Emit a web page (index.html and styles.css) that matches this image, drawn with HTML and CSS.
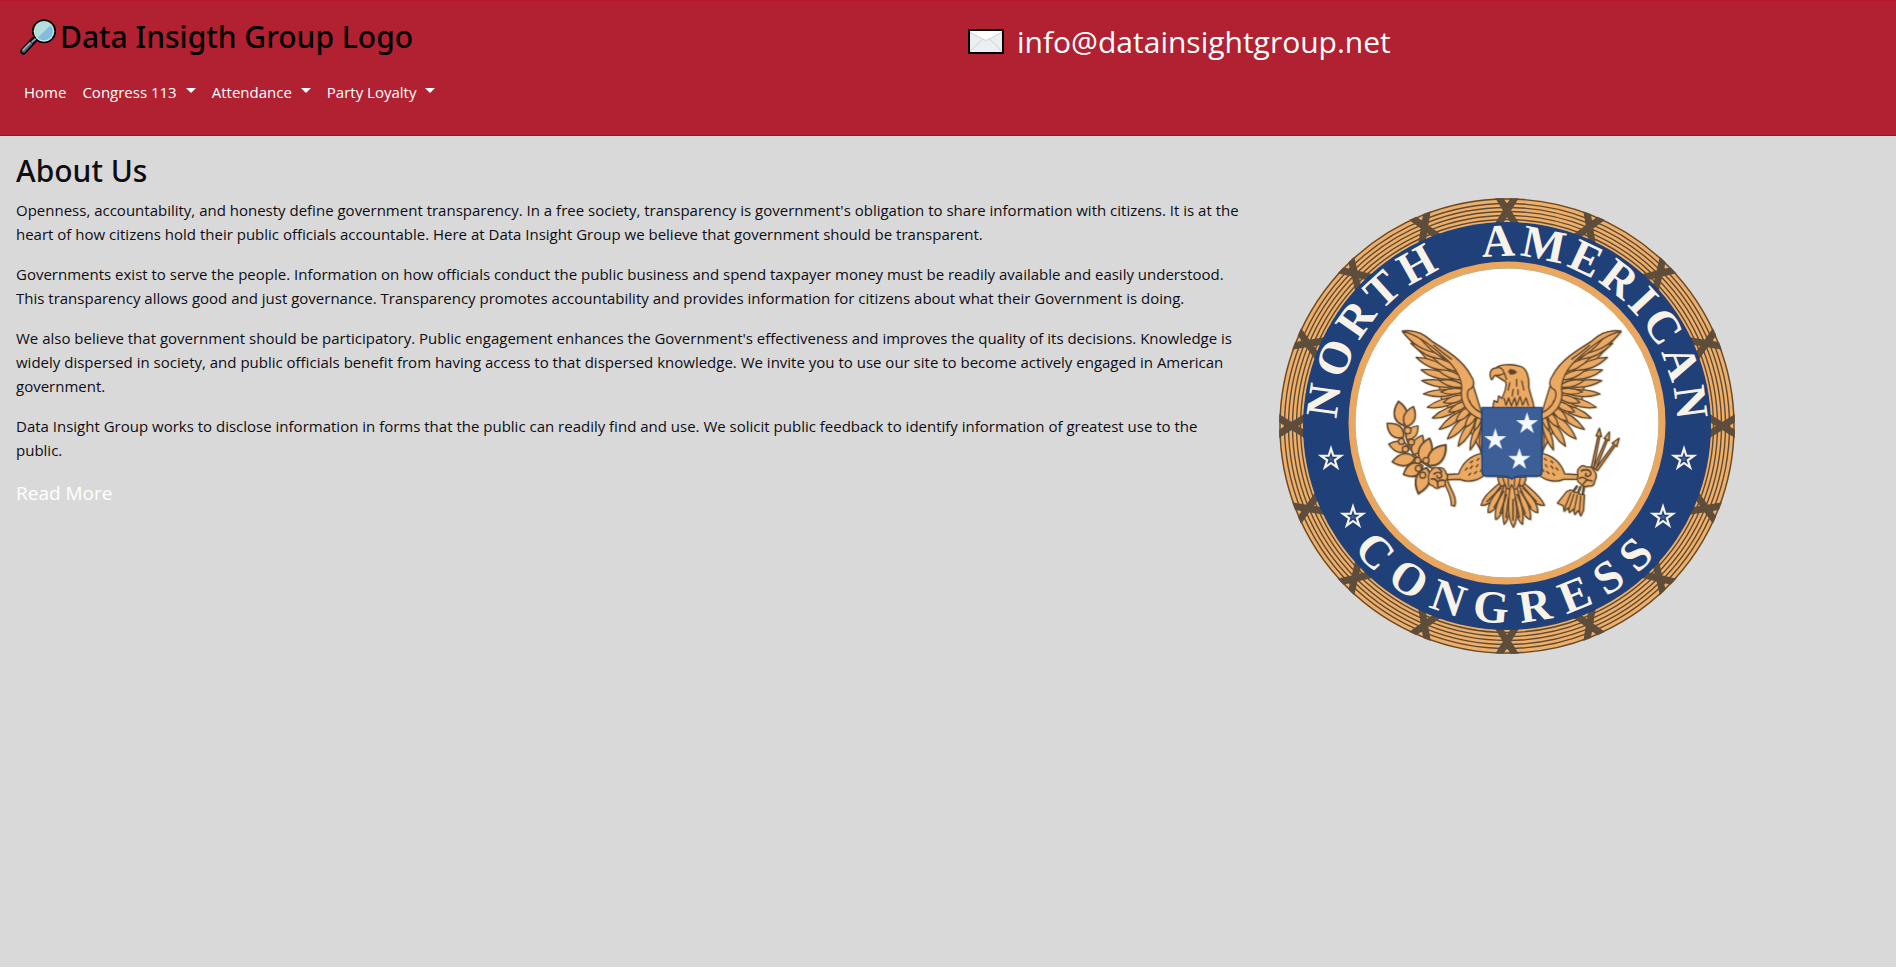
FILE: index.html
```html
<!DOCTYPE html>
<html lang="en">
<head>
<meta charset="utf-8">
<title>Data Insight Group</title>
<link rel="stylesheet" href="styles.css">
</head>
<body>
<div class="page">
  <header class="header">
    <div class="header-col">
      <h1 class="brand">
        <svg class="brand-icon" viewBox="0 0 108 108" aria-hidden="true">
          <path d="M10 97 42 63" stroke="#000" stroke-width="19" stroke-linecap="round"/>
          <circle cx="72" cy="37" r="36" fill="#000"/>
          <path d="M11 96 32 74" stroke="#55637f" stroke-width="10" stroke-linecap="round"/>
          <path d="M9 93 30 71" stroke="#a9b5c8" stroke-width="4" stroke-linecap="round"/>
          <path d="M35 70 47 59" stroke="#8c9bb5" stroke-width="6"/>
          <circle cx="72" cy="37" r="31" fill="#d4e6ec"/>
          <circle cx="72" cy="37" r="27" fill="#83bce0"/>
          <path d="M46 44A27 27 0 0 1 92 19L53 56A27 27 0 0 1 46 44Z" fill="#b2dfdb"/>
        </svg>
        <span>Data Insigth Group Logo</span>
      </h1>
      <nav class="nav">
        <a class="nav-link" href="#home">Home</a>
        <button class="nav-link caret" type="button">Congress 113</button>
        <button class="nav-link caret" type="button">Attendance</button>
        <button class="nav-link caret" type="button">Party Loyalty</button>
      </nav>
    </div>
    <div class="header-col contact">
      <svg class="mail-icon" viewBox="0 0 108 75" aria-hidden="true">
        <path fill="#000" d="M0 0h108v75H0z"/>
        <path fill="#eceff1" d="M6 6h96v63H6z"/>
        <path d="M6 67 43 31M102 67 65 31" stroke="#d5cdc8" stroke-width="3"/>
        <path d="M6 6h96v4L60 32q-6 4-12 0L6 10Z" fill="#fff"/>
        <path d="M6 10 48 32q6 4 12 0L102 10" fill="none" stroke="#cfd0d2" stroke-width="3"/>
      </svg>
      <a class="mail-link" href="mailto:info@datainsightgroup.net">info@datainsightgroup.net</a>
    </div>
  </header>

  <main class="main">
    <h2 class="title">About Us</h2>
    <div class="row">
      <div class="copy">
        <p>Openness, accountability, and honesty define government transparency. In a free society, transparency is government's obligation to share information with citizens. It is at the heart of how citizens hold their public officials accountable. Here at Data Insight Group we believe that government should be transparent.</p>
        <p>Governments exist to serve the people. Information on how officials conduct the public business and spend taxpayer money must be readily available and easily understood. This transparency allows good and just governance. Transparency promotes accountability and provides information for citizens about what their Government is doing.</p>
        <p>We also believe that government should be participatory. Public engagement enhances the Government's effectiveness and improves the quality of its decisions. Knowledge is widely dispersed in society, and public officials benefit from having access to that dispersed knowledge. We invite you to use our site to become actively engaged in American government.</p>
        <p>Data Insight Group works to disclose information in forms that the public can readily find and use. We solicit public feedback to identify information of greatest use to the public.</p>
        <a class="more" href="#more">Read More</a>
      </div>
      <div class="figure">
        <svg class="seal" viewBox="-228 -228 456 456" role="img" aria-label="North American Congress seal">
          <defs>
            <path id="arc-top" d="M0 170A170 170 0 0 1 0-170A170 170 0 0 1 0 170"/>
            <path id="arc-bottom" d="M-197 0A197 197 0 0 0 197 0"/>
            <clipPath id="disc"><circle r="228"/></clipPath>
            <path id="star" d="M0-1 .225-.309 .951-.309 .363 .118 .588 .809 0 .382-.588 .809-.363 .118-.951-.309-.225-.309Z"/>
            <g id="wrap"><path d="M-9-230 9-201M9-230-9-201"/></g>
            <g id="wraps4">
              <use href="#wrap"/><use href="#wrap" transform="rotate(22.5)"/><use href="#wrap" transform="rotate(45)"/><use href="#wrap" transform="rotate(67.5)"/>
            </g>
            <g id="outline-star">
              <use href="#star" transform="scale(14)" fill="#f8f3ea"/>
              <use href="#star" transform="scale(7)" fill="#20407a"/>
              <use href="#star" transform="scale(3)" fill="#46608e"/>
            </g>
            <g id="wing">
              <path d="M97 62C130 58 160 68 185 92C225 120 275 150 300 195L335 308V425L300 360 215 270 200 180Z"/>
              <path d="M300 418Q328 385 335 335Q300 362 300 418Z"/>
              <path d="M332 425Q342 385 338 345Q322 380 332 425Z"/>
              <path d="M264 407Q303 380 318 325Q275 345 264 407Z"/>
              <path d="M232 385Q280 368 305 310Q255 328 232 385Z"/>
              <path d="M207 356Q258 348 295 295Q240 308 207 356Z"/>
              <path d="M187 322Q240 325 285 280Q225 284 187 322Z"/>
              <path d="M172 290Q228 298 275 262Q215 256 172 290Z"/>
              <path d="M160 250Q212 268 268 245Q210 228 160 250Z"/>
              <path d="M155 210Q205 240 262 225Q210 200 155 210Z"/>
              <path d="M153 178Q195 212 252 205Q210 172 153 178Z"/>
              <path d="M138 140Q180 182 240 180Q195 142 138 140Z"/>
              <path d="M122 98Q165 143 225 150Q185 108 122 98Z"/>
              <path d="M97 62Q138 118 205 128Q175 78 97 62Z"/>
              <path d="M312 362Q338 340 338 302Q314 320 312 362Z"/>
              <path d="M285 350Q315 340 325 300Q290 308 285 350Z"/>
              <path d="M258 332Q292 328 310 288Q270 290 258 332Z"/>
              <path d="M236 304Q275 308 300 272Q258 270 236 304Z"/>
              <path d="M220 276Q260 285 290 255Q248 248 220 276Z"/>
              <path d="M212 244Q250 260 288 240Q250 224 212 244Z"/>
              <path d="M208 210Q245 238 285 228Q250 200 208 210Z"/>
              <path d="M203 178Q240 212 285 208Q250 175 203 178Z"/>
              <path d="M188 140Q225 182 275 185Q240 146 188 140Z"/>
              <path d="M148 80Q195 140 255 155Q220 105 148 80Z"/>
              <path d="M97 62C130 56 160 68 185 92C228 118 280 150 302 195C316 214 312 232 296 238C284 256 302 294 337 308V328C298 314 272 285 274 245C280 215 262 172 220 138C190 110 145 72 97 62Z"/>
              <path d="M190 103Q215 125 246 147" fill="none"/>
            </g>
            <path id="leaf" d="M0 0C-19-13-21-35 0-58C21-35 19-13 0 0Z"/>
          </defs>

          <circle r="228" fill="#efaf68"/>
          <g class="rim">
            <circle r="227"/><circle r="222.5"/><circle r="218.5"/><circle r="214.5"/><circle r="210.5"/><circle r="206.5"/>
          </g>
          <g class="wraps" clip-path="url(#disc)">
            <use href="#wraps4"/><use href="#wraps4" transform="rotate(90)"/><use href="#wraps4" transform="rotate(180)"/><use href="#wraps4" transform="rotate(270)"/>
          </g>
          <circle r="204" fill="#20407a"/>
          <ellipse cy="-3" rx="155" ry="158" fill="#fff" stroke="#eca75f" stroke-width="7"/>
          <ellipse cy="-3" rx="152" ry="155" fill="none" stroke="#ccb083"/>
          <g class="seal-text">
            <text dx="0 6 6 6 6"><textPath href="#arc-top" startOffset="274">NORTH</textPath></text>
            <text dx="0 4 4 4 4 4 4 4"><textPath href="#arc-top" startOffset="509">AMERICAN</textPath></text>
            <text dx="0 13 13 13 13 13 13 13"><textPath href="#arc-bottom" startOffset="133">CONGRESS</textPath></text>
          </g>
          <use href="#outline-star" x="-176" y="33"/>
          <use href="#outline-star" x="-154" y="91"/>
          <use href="#outline-star" x="177" y="33"/>
          <use href="#outline-star" x="156" y="91"/>

          <g class="eagle" transform="translate(-137 -115.5) scale(.3333)">
            <use href="#wing"/>
            <use href="#wing" transform="translate(850 0) scale(-1 1)"/>
            <path d="M364 207C356 190 360 174 378 172C388 160 430 160 450 167C470 172 478 200 476 230C482 258 490 272 492 294H368L372 270 382 276 386 256 396 264C402 245 414 228 406 212C396 209 384 198 376 194C367 196 370 206 364 207Z"/>
            <path d="M378 172C392 168 400 176 403 188Q392 196 376 194M403 188 410 208M414 182 438 184Q430 194 418 188M402 262 408 284 416 262 424 286 434 262 440 286 450 258 458 284 468 262 476 286M420 215 414 240M440 205V228M455 210 462 240M430 235 426 258M444 236V254" fill="none"/>
            <path d="M420 178Q432 176 438 185Q426 192 418 186Z" fill="#5d4630"/>
            <path d="M337 428C300 435 276 460 266 490L208 493V508L270 506C290 516 325 512 344 492Z"/>
            <path d="M513 428C550 435 574 460 584 490L636 493V506L580 506C560 516 525 512 506 492Z"/>
            <path d="M285 480l8-9M300 475l8-10M318 470l7-9M295 495l8-8M312 490l9-8M330 484l6-8M300 458l9-8M320 450l8-7M565 480l-8-9M550 475l-8-10M532 470l-7-9M555 495l-8-8M538 490l-9-8M522 484l-4-8M550 458l-9-8M530 450l-8-7" fill="none"/>
            <g>
              <path d="M405 500C380 530 340 550 333 584Q362 590 425 505Z"/>
              <path d="M445 500C470 530 510 550 523 584Q492 590 425 505Z"/>
              <path d="M410 502C385 540 352 570 354 606Q382 605 425 505Z"/>
              <path d="M440 502C465 540 505 570 503 606Q475 605 425 505Z"/>
              <path d="M412 502C395 550 370 590 377 627Q403 618 425 505Z"/>
              <path d="M438 502C455 550 486 590 481 627Q450 618 425 505Z"/>
              <path d="M415 502C405 560 392 600 402 641Q424 625 425 505Z"/>
              <path d="M435 502C445 560 466 600 457 641Q432 625 425 505Z"/>
              <path d="M425 502C413 570 410 620 430 650C448 620 440 570 425 502Z"/>
              <path d="M350 574 395 530M372 592 402 540M390 610 410 550M408 622 416 560M429 630V565M500 574 458 530M483 592 450 540M466 610 441 550M448 622 435 560" stroke-width="5"/>
              <path d="M383 500Q390 540 405 520Q414 550 425 522Q436 550 447 520Q460 540 468 500Z"/>
              <path d="M398 502 405 522M414 502 416 530M434 502 433 530M451 502 447 522"/>
            </g>
            <path d="M216 500C225 530 245 550 244 584L254 586C264 560 235 530 230 500Z"/>
            <path d="M215 485C170 468 135 445 120 410C104 385 108 350 100 340" fill="none" stroke-width="5"/>
            <use href="#leaf" transform="translate(98 344) rotate(-10) scale(1.3 1.25)"/>
            <use href="#leaf" transform="translate(108 348) rotate(20) scale(1.1)"/>
            <use href="#leaf" transform="translate(100 380) rotate(-50) scale(1.2 1.1)"/>
            <use href="#leaf" transform="translate(110 386) rotate(40) scale(.9)"/>
            <use href="#leaf" transform="translate(118 416) rotate(-76) scale(1.1)"/>
            <use href="#leaf" transform="translate(130 432) rotate(25) scale(1.1)"/>
            <use href="#leaf" transform="translate(135 442) rotate(-100) scale(1.2)"/>
            <use href="#leaf" transform="translate(155 455) rotate(18) scale(1.3)"/>
            <use href="#leaf" transform="translate(175 465) rotate(40) scale(1.4)"/>
            <use href="#leaf" transform="translate(158 465) rotate(-115) scale(1.3 1.1)"/>
            <use href="#leaf" transform="translate(170 472) rotate(-162) scale(1.4)"/>
            <circle cx="113" cy="360" r="10"/><circle cx="94" cy="393" r="9"/><circle cx="124" cy="395" r="9"/><circle cx="106" cy="416" r="9"/><circle cx="143" cy="450" r="9"/><circle cx="168" cy="450" r="9"/><circle cx="145" cy="474" r="9"/><circle cx="158" cy="494" r="9"/>
            <path d="M183 480Q172 492 176 506Q172 522 188 526Q200 540 212 528Q228 530 226 512Q238 500 228 488Q222 468 204 472Q190 468 183 480Z"/>
            <path d="M190 492Q200 482 212 488Q220 498 208 504Q198 500 202 494M182 506Q196 502 202 514L204 530M202 514Q214 504 226 512M204 472Q212 476 216 486" stroke-width="5" fill="none"/>
            <g>
              <path d="M664 470 684 376 678 376 688 353 694 378 689 377 671 472ZM670 474 708 385 702 384 718 364 717 390 712 388 677 476ZM676 476 732 400 726 398 747 383 740 408 736 404 682 480Z"/>
              <path d="M622 525 606 548M632 527 622 552M642 527 637 556" stroke-width="7"/>
              <path d="M590 543 603 538 612 545 622 546 632 552 643 553 640 600 632 616 625 600 614 612 610 596 598 606 594 592 582 602 580 586 562 578Z"/>
              <path d="M603 546 582 598M612 550 596 598M622 552 612 602M632 556 628 606"/>
              <path d="M632 468Q618 478 624 494Q618 512 630 518Q640 534 656 526Q672 530 674 510Q684 494 672 480Q664 466 650 470Q640 462 632 468Z"/>
              <path d="M632 482Q648 474 660 482Q668 494 652 498Q642 494 650 488M626 504Q642 496 650 508L668 512M636 524Q646 514 650 508" stroke-width="5" fill="none"/>
            </g>
            <path d="M335 291H516V483Q516 497 502 497H446Q432 499 425 506Q418 499 404 497H350Q336 497 336 483Z" fill="#3b5f96" stroke="#20407a"/>
            <g fill="#f4f9ff" stroke="none">
              <use href="#star" transform="translate(471 340) scale(35)"/>
              <use href="#star" transform="translate(376 388) scale(35)"/>
              <use href="#star" transform="translate(448 447) scale(35)"/>
            </g>
          </g>
        </svg>
      </div>
    </div>
  </main>
</div>
</body>
</html>
```
FILE: styles.css
```css
* { box-sizing: border-box; }

body {
  margin: 0;
  background: #fff;
  color: #0e0d14;
  font-family: "Open Sans", "Noto Sans", sans-serif;
  font-size: 15px;
  line-height: 24px;
}

a { text-decoration: none; }

.page {
  min-height: calc(100vh - 1px);
  background: #d9d9d9;
}

.header {
  display: flex;
  padding: 12px 0 23px;
  background: #b12132;
  border-top: 1px solid #bb142d;
  border-bottom: 1px solid #a80822;
}

.header-col {
  flex: 1 1 50%;
  padding-left: 16px;
}

.brand {
  display: flex;
  align-items: center;
  gap: 4px;
  height: 47px;
  margin: 0 0 12px;
  padding-left: 4px;
  color: #000;
  font-family: "Noto Sans", "Open Sans", sans-serif;
  font-size: 30px;
  font-weight: 500;
  line-height: 47px;
}

.brand-icon {
  width: 36px;
  height: 36px;
}

.nav { display: flex; }

.nav-link {
  display: flex;
  align-items: center;
  padding: 8px;
  border: 0;
  background: none;
  color: #fff;
  font: inherit;
}

.caret::after {
  content: "";
  margin: -3px 0 0 9px;
  border: 5px solid transparent;
  border-top-color: #fff;
  border-bottom: 0;
}

.contact {
  display: flex;
  align-items: center;
  align-self: flex-start;
  gap: 13px;
  padding: 5px 0 0 20px;
}

.mail-icon {
  width: 36px;
  height: 25px;
}

.mail-link {
  color: #fff;
  font-size: 30px;
  line-height: 47px;
}

.main { padding-top: 16px; }

.title {
  margin: 0 16px 8px;
  font-family: "Noto Sans", "Open Sans", sans-serif;
  font-size: 30px;
  font-weight: 500;
  line-height: 38px;
}

.row {
  display: grid;
  grid-template-columns: 2fr 1fr;
}

.copy { padding: 0 20px 0 16px; }

.copy p { margin: 0 0 16px; }

.more {
  color: #fff;
  font-size: 19px;
  line-height: 30px;
}

.figure { padding: 0 15px; }

.seal {
  display: block;
  width: 100%;
  max-width: 456px;
}

.rim {
  fill: none;
  stroke: #5d4b36;
  stroke-width: 1.4;
}

.wraps {
  stroke: #5f4d3b;
  stroke-width: 7;
}

.seal-text {
  fill: #f8f3ea;
  font-family: "Liberation Serif", serif;
  font-size: 46px;
  font-weight: 700;
}

.eagle {
  fill: #eba961;
  stroke: #5d4630;
  stroke-width: 4;
  stroke-linejoin: round;
  filter: drop-shadow(2px 2px 0 #cbbf99);
}
```
